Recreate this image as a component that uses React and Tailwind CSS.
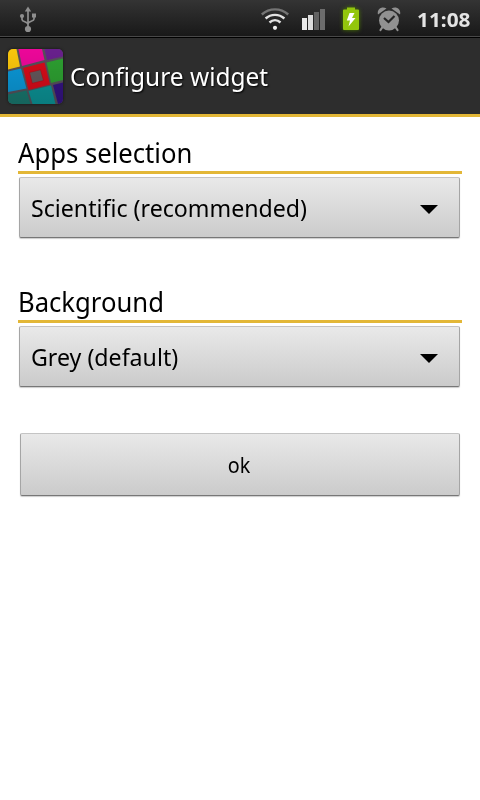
import { useState } from "react";

function UsbIcon() {
  return (
    <svg width="18" height="27" viewBox="0 0 18 27" fill="none" stroke="#8f8f8f" strokeWidth="1.7">
      <path d="M9 5v17M3 10v3.500c0 2.500 6 2 6 5M15 10v3c0 2.500-6 2-6 5" />
      <path d="M9 0.500l3.200 5H5.800z" fill="#8f8f8f" stroke="none" />
      <circle cx="9" cy="23" r="3.100" fill="#8f8f8f" stroke="none" />
      <circle cx="3" cy="10" r="2.100" fill="#8f8f8f" stroke="none" />
      <path d="M13 7.500h4v4h-4z" fill="#8f8f8f" stroke="none" />
    </svg>
  );
}

function WifiIcon() {
  return (
    <svg width="28" height="24" viewBox="0 0 28 24" fill="none" strokeWidth="2.4">
      <path d="M0.800 8.500C8.500 1.600 19.500 1.600 27.200 8.500" stroke="#747474" />
      <path d="M4.600 12.500C10 7.600 18 7.600 23.400 12.500" stroke="#e2e2e2" />
      <path d="M8.500 16.500C11.800 13.500 16.200 13.500 19.500 16.500" stroke="#e2e2e2" />
      <circle cx="14" cy="21.800" r="2.100" fill="#f0f0f0" />
    </svg>
  );
}

function SignalIcon() {
  return (
    <svg width="24" height="22" viewBox="0 0 24 22">
      <path d="M0 9h5v12H0z" fill="#e8e8e8" />
      <path d="M6 6h5v15H6z" fill="#dcdcdc" />
      <path d="M12 3h5v18h-5z" fill="#626262" />
      <path d="M18 0h5v21h-5z" fill="#6c6c6c" />
    </svg>
  );
}

function BatteryIcon() {
  return (
    <svg width="16" height="24" viewBox="0 0 16 24" className="drop-shadow-[0_0_2px_#4c7a00]">
      <path d="M4 2.500V0.500h8v2h3q1 0 1 1v18.500q0 1-1 1H1q-1 0-1-1V3.500q0-1 1-1z" fill="#93c60c" />
      <path d="M6.500 6h5L9 11h3.500L5.500 19.500l1.500-6H3.800z" fill="#fff" />
    </svg>
  );
}

function AlarmIcon() {
  return (
    <svg width="24" height="26" viewBox="0 0 24 26" fill="#919191">
      <circle cx="12" cy="14.500" r="10" />
      <path d="M1 8.500C-0.500 3 5 -0.500 9.500 2.500zM23 8.500C24.500 3 19 -0.500 14.500 2.500z" />
      <path d="M5.500 21l-2 3M18.500 21l2 3" stroke="#919191" strokeWidth="2.200" strokeLinecap="round" />
      <path d="M7 12l4.500 4L17.500 10" fill="none" stroke="#252525" strokeWidth="2.200" />
    </svg>
  );
}

function AppIcon() {
  return (
    <svg width="55" height="55" viewBox="0 0 55 55" className="shrink-0 overflow-hidden rounded-[5px] bg-[#55505a] shadow-[0_0_3px_#111]">
      <defs>
        <linearGradient id="shade" x1="0" y1="0" x2="0" y2="1">
          <stop offset="0" stopColor="#000" stopOpacity="0" />
          <stop offset="1" stopColor="#000" stopOpacity="0.15" />
        </linearGradient>
      </defs>
      <path d="M0 0H8.500L12 17.500L0 20.500z" fill="#f9c60c" />
      <path d="M10.500 0H34L36.500 11L14 17z" fill="#ec0799" />
      <path d="M36.500 0H55V7.500L39 11z" fill="#68208c" />
      <path d="M38.500 13.500L55 9.500V31L43 34z" fill="#2d9f31" />
      <path d="M0 22.500L13 19.500L18.500 39.500L0 43z" fill="#0b97d6" />
      <path d="M0 45.500L18.500 41.500L22.500 55H0z" fill="#19766d" />
      <path d="M20.500 42L43 36.500L47.500 55H24.500z" fill="#0b9295" />
      <path d="M45 36L55 33.500V55H50z" fill="#341381" />
      <path d="M15 19L36.500 13.500L42 35.500L20.500 41z" fill="#d60b19" />
      <path d="M21.500 23.500L32.500 20.800L35.500 31.500L24.300 34.300z" fill="#65575b" stroke="#b30711" strokeWidth="0.5" />
      <path d="M0 0H55V55H0z" fill="url(#shade)" />
    </svg>
  );
}

function StatusBar() {
  return (
    <div className="flex h-[38px] border-b border-black bg-linear-to-b from-[#343434] to-[#181818]">
      <div className="flex grow items-start border-b border-[#484848]">
        <div className="ml-[19px] mt-[6px]"><UsbIcon /></div>
        <div className="ml-auto mt-[6px]"><WifiIcon /></div>
        <div className="ml-[13px] mt-[9px]"><SignalIcon /></div>
        <div className="ml-[17px] mt-[7px]"><BatteryIcon /></div>
        <div className="ml-[18px] mt-[6px]"><AlarmIcon /></div>
        <span className="ml-[16px] mr-[10px] mt-[6px] w-[53px] origin-left scale-x-[1.04] whitespace-nowrap text-[20px] font-bold leading-[28px] text-[#e4e4e4]">11:08</span>
      </div>
    </div>
  );
}

function Section({ title, value, onClick, className }) {
  return (
    <section className={className}>
      <h2 className="h-[39px] border-b-3 border-[#e3b737] text-[27px] leading-[36px]">
        <span className="inline-block origin-left scale-x-[0.95] whitespace-nowrap">{title}</span>
      </h2>
      <button
        type="button"
        onClick={onClick}
        className="mx-px mt-[3px] flex h-[61px] w-[441px] items-center justify-between rounded-[2px] border border-[#a5a5a5] border-t-[#c4c4c4] border-b-[#777] bg-linear-to-b from-[#e9e9e9] to-[#cbcbcb] pl-[11px] pr-[21px] text-[24px] shadow-[0_1px_1px_#ccc]"
      >
        <span className="inline-block origin-left scale-x-[0.965] whitespace-nowrap">{value}</span>
        <svg width="18" height="9" viewBox="0 0 18 9" className="mt-[4px]">
          <path d="M0 0H18L9 9z" fill="#000" />
        </svg>
      </button>
    </section>
  );
}

const APP_SETS = ["Scientific (recommended)", "All apps"];
const BACKGROUNDS = ["Grey (default)", "Transparent"];

export default function App() {
  const [appSet, setAppSet] = useState(0);
  const [background, setBackground] = useState(0);

  return (
    <div className="h-[800px] w-[480px] overflow-hidden bg-white font-['Noto_Sans',sans-serif] text-black">
      <StatusBar />
      <header className="flex h-[79px] items-center border-b-3 border-[#e3b737] bg-[#2d2d2d] pl-2">
        <AppIcon />
        <h1 className="ml-[7px] origin-left scale-x-[0.94] whitespace-nowrap text-[26px] text-white [text-shadow:1px_1px_2px_#000]">
          Configure widget
        </h1>
      </header>
      <main className="pl-[18px] pr-[18px] pt-[18px]">
        <Section
          title="Apps selection"
          value={APP_SETS[appSet]}
          onClick={() => setAppSet((appSet + 1) % APP_SETS.length)}
        />
        <Section
          title="Background"
          className="mt-[46px]"
          value={BACKGROUNDS[background]}
          onClick={() => setBackground((background + 1) % BACKGROUNDS.length)}
        />
        <button
          type="button"
          className="ml-[2px] mt-[46px] h-[63px] w-[440px] rounded-[2px] border border-[#a5a5a5] border-t-[#c4c4c4] border-b-[#777] bg-linear-to-b from-[#e9e9e9] to-[#cbcbcb] pr-[2px] pt-[2px] text-[21px] shadow-[0_1px_1px_#ccc]"
        >
          <span className="inline-block scale-x-[0.94]">ok</span>
        </button>
      </main>
    </div>
  );
}
